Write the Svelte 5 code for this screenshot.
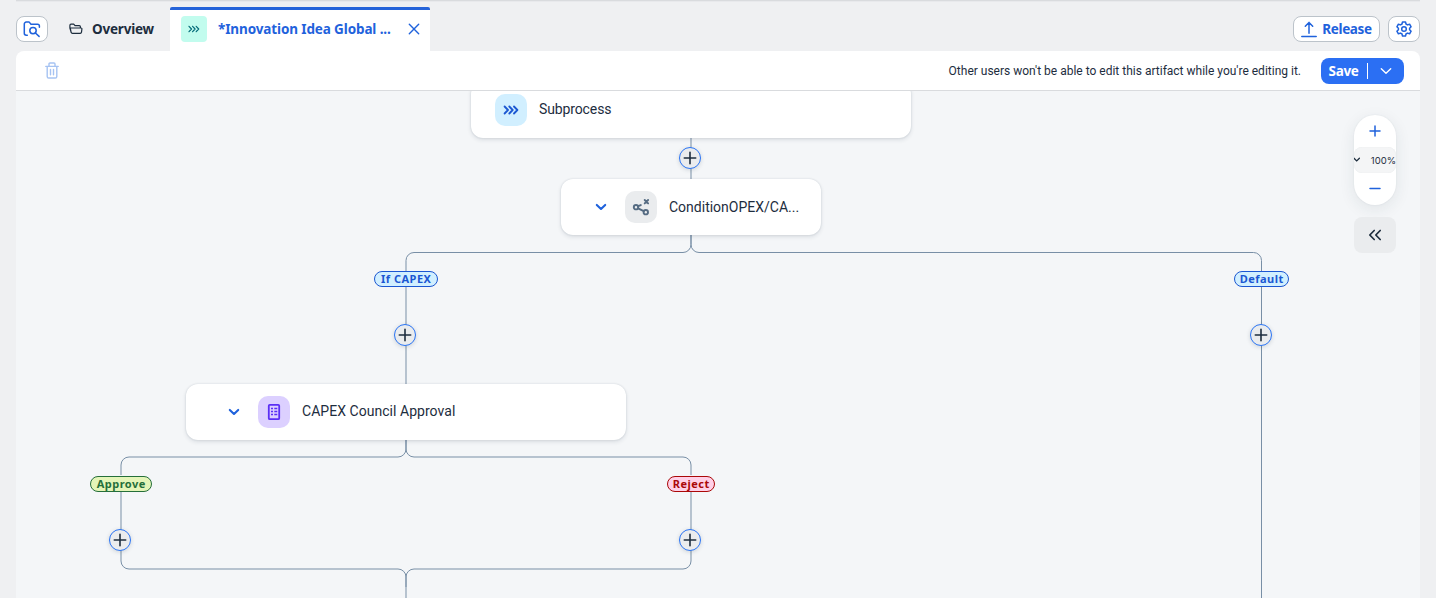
<script>
  const line = '#788fa6';
  const wires = [
    'M691 138V180',
    'M691 235V244.5a8 8 0 0 1-8 8H414a8 8 0 0 0-8 8V384',
    'M691 235V244.5a8 8 0 0 0 8 8H1253.5a8 8 0 0 1 8 8V598',
    'M406 440V449a8 8 0 0 1-8 8H129a8 8 0 0 0-8 8V475M121 476V561a8 8 0 0 0 8 8H398a8 8 0 0 1 8 8V598',
    'M406 440V449a8 8 0 0 0 8 8H683a8 8 0 0 1 8 8V475M691 476V561a8 8 0 0 1-8 8H414a8 8 0 0 0-8 8V587'
  ];
  const adders = [[690, 158], [405, 335], [1261, 335], [120, 540], [690, 540]];
  const tags = [
    { text: 'If CAPEX', x: 374, y: 271, w: 64, kind: 'info' },
    { text: 'Default', x: 1234, y: 271, w: 55, kind: 'info' },
    { text: 'Approve', x: 90, y: 476, w: 62, kind: 'good' },
    { text: 'Reject', x: 667, y: 476, w: 48, kind: 'bad' }
  ];
</script>

<div class="app">
  <div class="strip"></div>
  <header>
    <button class="btn square" aria-label="Browse">
      <svg width="18" height="18" viewBox="0 0 18 18" fill="none" stroke-width="1.5" stroke-linecap="round" stroke-linejoin="round"><path d="M4.3 15.2H3.2A1.9 1.9 0 0 1 1.3 13.3V4a1.9 1.9 0 0 1 1.9-1.9H6.2L8 4.3h6.6A1.8 1.8 0 0 1 16.4 6.1v1.1"/><circle cx="10" cy="10.6" r="3.2"/><path d="M12.4 13l3.7 3.4"/></svg>
    </button>
    <div class="tab">
      <svg width="14" height="12" viewBox="0 0 14 12" fill="none" stroke="#1d2d3e" stroke-width="1.2" stroke-linejoin="round"><path d="M2.3 9.8L.9 5.2V2.4Q.9 1.2 2 1.2H4.7L6 2.7H10.3Q11.4 2.7 11.4 3.8V5M1.2 5H12.1Q13 5 12.9 6L12.5 9.1Q12.3 10.3 11.2 10.3H3.5Q2.4 10.3 2.1 9.1Z"/></svg>
      <span class="overview">Overview</span>
    </div>
    <div class="tab active">
      <span class="chip"><svg width="12" height="8" viewBox="0 0 12 8" fill="none" stroke="#046c7a" stroke-width="1.2" stroke-linecap="round" stroke-linejoin="round"><path d="M1 1.3L3.5 4 1 6.7M4.6 1.3L7.1 4 4.6 6.7M8.2 1.3L10.7 4 8.2 6.7"/></svg></span>
      <span class="title">*Innovation Idea Global ...</span>
      <svg class="close" width="12" height="12" viewBox="0 0 12 12" fill="none" stroke-width="1.4" stroke-linecap="round"><path d="M1.3 1.3l9.4 9.4M10.7 1.3L1.3 10.7"/></svg>
    </div>
    <div class="grow"></div>
    <button class="btn release">
      <svg width="16" height="17" viewBox="0 0 16 17" fill="none" stroke-width="1.5" stroke-linecap="round" stroke-linejoin="round"><path d="M8 12.2V1.6M4.3 5.2L8 1.4 11.7 5.2M.8 15.6H15.2"/></svg>
      <span>Release</span>
    </button>
    <button class="btn square gear" aria-label="Settings">
      <svg width="16" height="16" viewBox="0 0 16 16" fill="none" stroke-width="1.5" stroke-linejoin="round"><path d="M6.5.9H9.5L10 3 11.5 3.9 13.6 3.2 15.1 5.8 13.6 7.3V8.7L15.1 10.2 13.6 12.8 11.5 12.1 10 13 9.5 15.1H6.5L6 13 4.5 12.1 2.4 12.8.9 10.2 2.4 8.7V7.3L.9 5.8 2.4 3.2 4.5 3.9 6 3Z"/><circle cx="8" cy="8" r="2.3"/></svg>
    </button>
  </header>

  <div class="toolbar">
    <svg width="14" height="17" viewBox="0 0 14 17" fill="none" stroke="#a6c3f2" stroke-width="1.4" stroke-linecap="round" stroke-linejoin="round"><path d="M.8 4.4H13.2M4 4.2V2Q4 1 5 1H9Q10 1 10 2V4.2M2.2 4.6V14.4Q2.2 16 3.7 16H10.3Q11.8 16 11.8 14.4V4.6M5.5 7.5V12.8M8.5 7.5V12.8"/></svg>
    <div class="grow"></div>
    <span class="note">Other users won't be able to edit this artifact while you're editing it.</span>
    <div class="save"><span>Save</span><i></i>
      <svg width="12" height="8" viewBox="0 0 12 8" fill="none" stroke="#fff" stroke-width="1.4" stroke-linecap="round" stroke-linejoin="round"><path d="M1.3 1.8L6 6.2 10.7 1.8"/></svg>
    </div>
  </div>

  <main></main>

  <div class="canvas">
    <svg class="wires" width="1436" height="598" fill="none" stroke={line}>
      {#each wires as d}<path {d} />{/each}
    </svg>

    <div class="node sub">
      <span class="icon blue"><svg width="16" height="10" viewBox="0 0 16 10" fill="none" stroke="#1b57d2" stroke-width="1.8" stroke-linecap="round" stroke-linejoin="round"><path d="M1.6 1.5L5 5 1.6 8.5M6.3 1.5L9.7 5 6.3 8.5M11 1.5L14.4 5 11 8.5"/></svg></span>
      <span class="name n1">Subprocess</span>
    </div>
    <div class="node cond">
      <svg class="chev" width="12" height="8" viewBox="0 0 12 8"><path d="M1.8 1.9L6 5.9 10.2 1.9"/></svg>
      <span class="icon gray"><svg width="18" height="18" viewBox="0 0 18 18" fill="none" stroke="#556b82" stroke-width="1.9" stroke-linecap="round"><circle cx="4" cy="9.2" r="2.2"/><circle cx="13.8" cy="14.2" r="2.2"/><path d="M6.2 8.2L8.8 7.1M6.1 10.3L11.7 13.1M12.7 2L16.1 5.4M16.1 2L12.7 5.4"/></svg></span>
      <span class="name">ConditionOPEX/CA...</span>
    </div>
    <div class="node appr">
      <svg class="chev" width="12" height="8" viewBox="0 0 12 8"><path d="M1.8 1.9L6 5.9 10.2 1.9"/></svg>
      <span class="icon violet"><svg width="14" height="18" viewBox="0 0 14 18" fill="none" stroke="#5b2ff5"><rect x="1.8" y="1.8" width="10.4" height="14.4" rx="1" stroke-width="1.8"/><path d="M4 5.5H6M7.3 5.5H10.3M4 8.5H6M7.3 8.5H10.3M4 11.5H6M7.3 11.5H10.3" stroke-width="1.5"/></svg></span>
      <span class="name n3">CAPEX Council Approval</span>
    </div>

    {#each tags as t}
      <div class="tag {t.kind}" style="left:{t.x}px;top:{t.y}px;width:{t.w}px"><span>{t.text}</span></div>
    {/each}
    {#each adders as [x, y]}
      <div class="add" style="left:{x - 11}px;top:{y - 11}px"><svg width="14" height="14" viewBox="0 0 14 14" stroke="#1d2d3e" stroke-width="1.6" stroke-linecap="round"><path d="M7 1.3V12.7M1.3 7H12.7"/></svg></div>
    {/each}

    <div class="side">
      <div class="zoom">
        <svg width="12" height="12" viewBox="0 0 12 12" stroke-width="1.5" stroke-linecap="round"><path d="M6 1V11M1 6H11"/></svg>
        <div class="level"><svg width="8" height="6" viewBox="0 0 8 6" fill="none" stroke-width="1.3" stroke-linecap="round"><path d="M0 1.3L2.7 3.9 5.4 1.3"/></svg><span>100%</span></div>
        <svg width="12" height="12" viewBox="0 0 12 12" stroke-width="1.5" stroke-linecap="round"><path d="M1 5.5H11"/></svg>
      </div>
      <div class="collapse"><svg width="14" height="12" viewBox="0 0 14 12" fill="none" stroke="#1d2d3e" stroke-width="1.7" stroke-linecap="round" stroke-linejoin="round"><path d="M6.2 1.5L1.8 6 6.2 10.5M12.2 1.5L7.8 6 12.2 10.5"/></svg></div>
    </div>
  </div>
</div>

<style>
  :global(body) { margin: 0; background: #eff0f2; }
  .app { position: relative; width: 1436px; height: 598px; overflow: hidden; display: flex; flex-direction: column; box-sizing: border-box; font-family: "Noto Sans", "Open Sans", sans-serif; color: #1d2d3e; background: #eff0f2; }
  .app * { box-sizing: border-box; }
  svg { display: block; flex: none; }
  .strip { height: 7px; margin: 0 16px; flex: none; background: linear-gradient(#d9dbde 0 1px, #e8e9ec 1px 2px, transparent 2px); }
  header { height: 44px; flex: none; display: flex; align-items: center; padding: 0 16px; }
  .grow { flex: 1; }
  .btn { height: 26px; background: #fff; border: 1px solid #bcc3ca; border-radius: 8px; padding: 0; display: flex; align-items: center; justify-content: center; font: 700 13.5px "Noto Sans", sans-serif; color: #1f62dc; }
  .btn svg, .close { stroke: #1f62dc; }
  .square { width: 32px; }
  .release { width: 87px; gap: 5px; }
  .release span { letter-spacing: -0.36px; }
  .gear { margin-left: 8px; }
  .tab { height: 44px; display: flex; align-items: center; font-size: 13.5px; font-weight: 700; white-space: nowrap; }
  .tab:not(.active) { width: 122px; padding-left: 21px; gap: 9px; }
  .overview { letter-spacing: -0.2px; }
  .active { width: 260px; background: #fff; border-top: 3px solid #2563d9; border-radius: 2px 2px 0 0; padding: 0 0 3px 11px; color: #1f62dc; }
  .chip { width: 26px; height: 26px; border-radius: 4px; background: #c2fcee; display: grid; place-items: center; margin-right: 11px; flex: none; }
  .title { width: 174px; letter-spacing: -0.12px; }
  .close { margin-left: 16px; }
  .toolbar { height: 40px; flex: none; margin: 0 16px; padding: 0 16px 0 29px; display: flex; align-items: center; background: #fff; border-bottom: 1px solid #d9dbde; border-radius: 8px 8px 0 0; }
  .note { font: 12px Roboto, sans-serif; margin-right: 20px; white-space: nowrap; }
  .save { width: 83px; height: 26px; background: #2b6ff3; color: #fff; border-radius: 8px; display: flex; align-items: center; font-size: 13.5px; font-weight: 700; padding-left: 7.5px; letter-spacing: -.3px; }
  .save span { width: 31.5px; }
  .save i { width: 1px; height: 16px; background: #fff; margin: 0 12px 0 7px; }
  main { flex: 1; margin: 0 16px; background: #f4f6f8; }
  .canvas { position: absolute; inset: 0; clip-path: inset(91px 0 0 0); }
  .wires { position: absolute; left: 0; top: 0; }
  .node { position: absolute; height: 56px; background: #fff; border-radius: 12px; display: flex; align-items: center; box-shadow: 0 0 2px rgba(34,53,72,.16), 0 2px 4px rgba(34,53,72,.12); }
  .sub { left: 471px; top: 82px; width: 440px; padding-left: 24px; }
  .cond { left: 561px; top: 179px; width: 260px; padding-left: 34px; }
  .appr { left: 186px; top: 384px; width: 440px; padding-left: 42px; }
  .chev { fill: none; stroke: #1f62dc; stroke-width: 2.1; stroke-linecap: round; stroke-linejoin: round; margin-right: 18px; }
  .icon { width: 32px; height: 32px; border-radius: 10px; display: grid; place-items: center; margin-right: 12px; flex: none; }
  .blue { background: #d1efff; }
  .gray { background: #eaecee; }
  .violet { background: #dcd0ff; }
  .name { font: 14px Roboto, sans-serif; white-space: nowrap; }
  .n1 { letter-spacing: -.12px; padding-bottom: 2px; }
  .n3 { letter-spacing: .04px; padding-bottom: 2px; }
  .tag { position: absolute; height: 16px; border: 1px solid; border-radius: 8px; display: flex; align-items: center; justify-content: center; font: 700 11px/14px "Noto Sans", sans-serif; letter-spacing: .5px; white-space: nowrap; }
  .tag span { margin-right: -.5px; }
  .info { color: #1b57d2; background: #d1efff; }
  .good { color: #256f3a; background: #e4f5b8; }
  .bad { color: #aa0808; background: #ffd0e7; }
  .add { position: absolute; width: 22px; height: 22px; border-radius: 50%; border: 1.3px solid #2b75f5; background: #eaecee; display: grid; place-items: center; box-shadow: 0 1px 4px rgba(34,53,72,.18); }
  .side { position: absolute; left: 1354px; top: 115px; width: 42px; }
  .zoom { height: 90px; border-radius: 21px; background: #fff; display: flex; flex-direction: column; align-items: center; justify-content: space-between; padding: 10px 0; box-shadow: 0 0 2px rgba(34,53,72,.08), 0 4px 16px rgba(34,53,72,.09); }
  .zoom svg { stroke: #1f62dc; }
  .level { width: 42px; height: 26px; border-radius: 8px; background: #f4f5f6; display: flex; align-items: center; justify-content: space-between; font: 9.5px Inter, sans-serif; overflow: hidden; box-shadow: inset 0 0 1px #dfe2e5; }
  .level span { padding-top: 1px; }
  .level svg { stroke: #1d2d3e; }
  .collapse { margin-top: 12px; height: 36px; border-radius: 8px; background: #eaecee; display: grid; place-items: center; }
</style>
